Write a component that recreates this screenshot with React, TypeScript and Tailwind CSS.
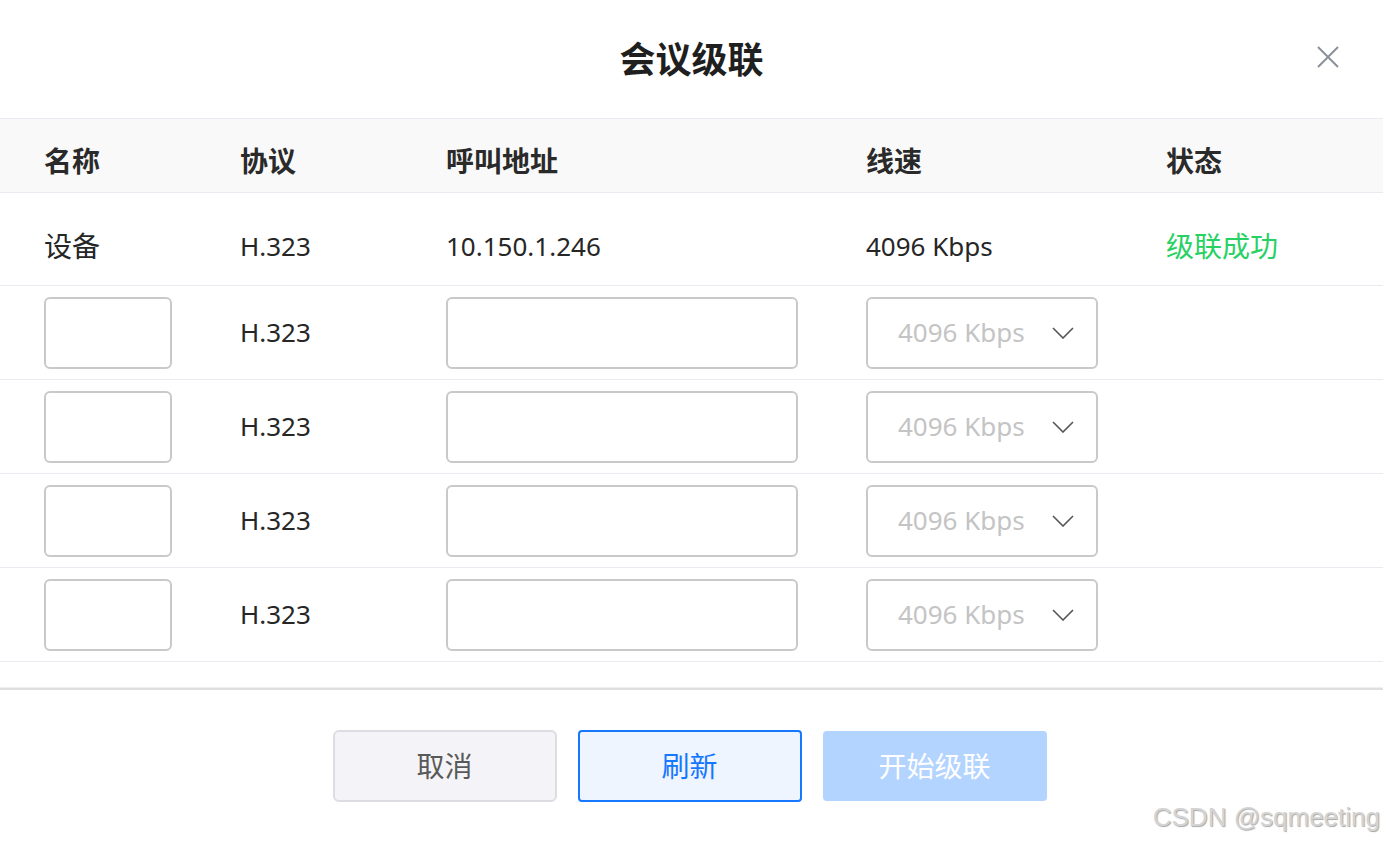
const font = { fontFamily: '"Noto Sans", "Noto Sans CJK SC", sans-serif' };

const cols = "grid grid-cols-[196px_206px_420px_300px_1fr] px-[44px] items-center";

const editRows = [1, 2, 3, 4];

export default function App() {
  return (
    <div className="relative w-[1383px] h-[843px] bg-white overflow-hidden text-[#262626]" style={font}>
      {/* title bar */}
      <div className="relative h-[118px] flex items-center justify-center">
        <h1 className="text-[36px] font-bold text-[#1f1f1f] mt-[2px]">会议级联</h1>
        <button className="absolute right-[44px] top-[46px] text-[#8c9099]">
          <svg width="22" height="22" viewBox="0 0 22 22" fill="none" stroke="currentColor" strokeWidth="2">
            <path d="M1 1 21 21M21 1 1 21" />
          </svg>
        </button>
      </div>

      {/* table */}
      <div className="border-t border-[#e8ebf0]">
        <div className={`${cols} h-[74px] pt-[11px] bg-[#f9f9f9] border-b border-[#e8ebf0] text-[28px] font-bold text-[#2a2a2a]`}>
          <div>名称</div>
          <div>协议</div>
          <div>呼叫地址</div>
          <div>线速</div>
          <div>状态</div>
        </div>

        <div className={`${cols} h-[93px] border-b border-[#e8ebf0] text-[26px] pt-[14px]`}>
          <div className="text-[28px]">设备</div>
          <div>H.323</div>
          <div>10.150.1.246</div>
          <div>4096 Kbps</div>
          <div className="text-[28px] text-[#27d163]">级联成功</div>
        </div>

        {editRows.map((r) => (
          <div key={r} className={`${cols} h-[94px] border-b border-[#e8ebf0] text-[26px]`}>
            <div>
              <div className="w-[128px] h-[72px] rounded-[6px] border-2 border-[#c9c9c9]" />
            </div>
            <div>H.323</div>
            <div>
              <div className="w-[352px] h-[72px] rounded-[6px] border-2 border-[#c9c9c9]" />
            </div>
            <div>
              <div className="w-[232px] h-[72px] rounded-[6px] border-2 border-[#c9c9c9] flex items-center justify-between pl-[30px] pr-[22px]">
                <span className="text-[#c4c4c4]">4096 Kbps</span>
                <svg width="22" height="12" viewBox="0 0 22 12" fill="none" stroke="#555" strokeWidth="1.6">
                  <path d="M1 1l10 10L21 1" />
                </svg>
              </div>
            </div>
            <div />
          </div>
        ))}
      </div>

      {/* footer */}
      <div className="mt-[25px] border-t border-[#eef0f4]">
        <div className="border-t-2 border-[#dfdfdf] pt-[40px] flex justify-center gap-[21px] pr-[4px]">
          <button className="w-[224px] h-[72px] rounded-[6px] border-2 border-[#dcdde3] bg-[#f4f4f8] text-[28px] text-[#595959]">
            取消
          </button>
          <button className="w-[224px] h-[72px] rounded-[4px] border-2 border-[#1677ff] bg-[#eef5ff] text-[28px] text-[#1677ff]">
            刷新
          </button>
          <button className="w-[224px] h-[70px] mt-[1px] rounded-[4px] bg-[#b3d4ff] text-[28px] text-white">
            开始级联
          </button>
        </div>
      </div>

      <div
        className="absolute right-[3px] bottom-[6px] text-[26px] text-[#d4d4d4] [text-shadow:1px_1px_1px_#a8a8a8]"
        style={{ fontFamily: '"Liberation Sans", Arial, sans-serif' }}
      >
        CSDN @sqmeeting
      </div>
    </div>
  );
}
